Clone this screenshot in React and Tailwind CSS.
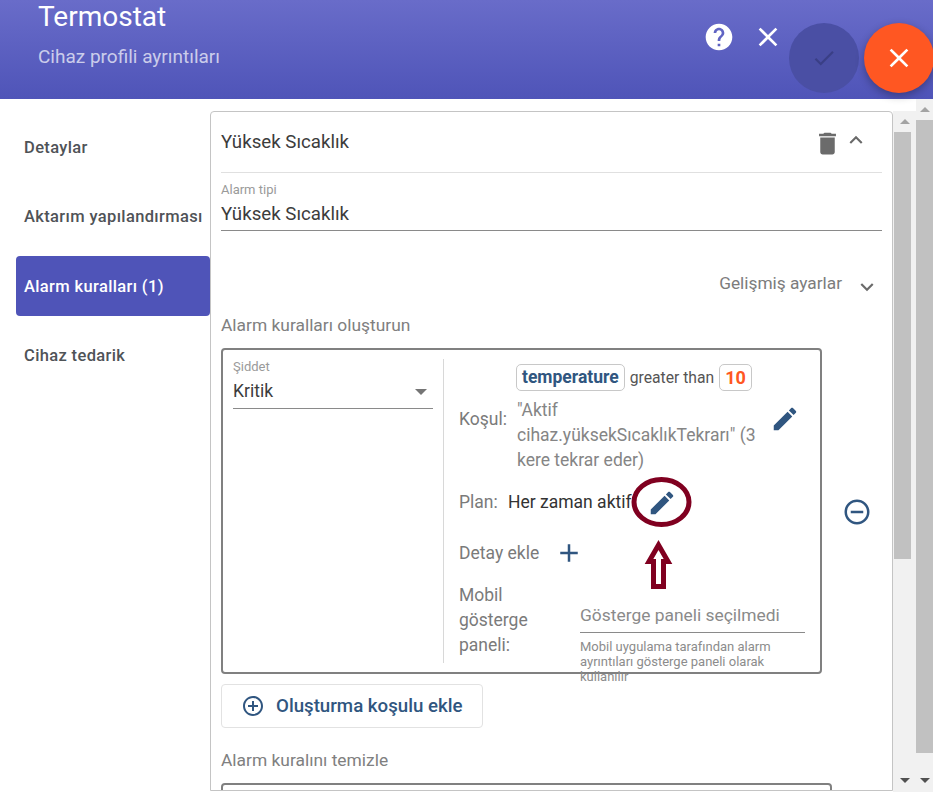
const P = {
  edit: "M3 17.25V21h3.75L17.81 9.94l-3.75-3.75L3 17.25zM20.71 7.04c.39-.39.39-1.02 0-1.41l-2.34-2.34c-.39-.39-1.02-.39-1.41 0l-1.83 1.83 3.75 3.75 1.83-1.83z",
  del: "M6 19c0 1.1.9 2 2 2h8c1.1 0 2-.9 2-2V7H6v12zM19 4h-3.5l-1-1h-5l-1 1H5v2h14V4z",
  help: "M12 2C6.48 2 2 6.48 2 12s4.48 10 10 10 10-4.48 10-10S17.52 2 12 2zm1 17h-2v-2h2v2zm2.07-7.75l-.9.92C13.45 12.9 13 13.5 13 15h-2v-.5c0-1.1.45-2.1 1.17-2.83l1.24-1.26c.37-.36.59-.86.59-1.41 0-1.1-.9-2-2-2s-2 .9-2 2H8c0-2.21 1.79-4 4-4s4 1.79 4 4c0 .88-.36 1.68-.93 2.25z",
  close: "M19 6.41L17.59 5 12 10.59 6.41 5 5 6.41 10.59 12 5 17.59 6.41 19 12 13.41 17.59 19 19 17.59 13.41 12z",
  check: "M9 16.17L4.83 12l-1.42 1.41L9 19 21 7l-1.41-1.41z",
  up: "M7.41 15.41L12 10.83l4.59 4.58L18 14l-6-6-6 6z",
  down: "M7.41 8.59L12 13.17l4.59-4.58L18 10l-6 6-6-6z",
  add: "M19 13h-6v6h-2v-6H5v-2h6V5h2v6h6v2z",
  addc: "M13 7h-2v4H7v2h4v4h2v-4h4v-2h-4V7zm-1-5C6.48 2 2 6.48 2 12s4.48 10 10 10 10-4.48 10-10S17.52 2 12 2zm0 18c-4.41 0-8-3.59-8-8s3.59-8 8-8 8 3.59 8 8-3.59 8-8 8z",
  remc: "M7 11v2h10v-2H7zm5-9C6.48 2 2 6.48 2 12s4.48 10 10 10 10-4.48 10-10S17.52 2 12 2zm0 18c-4.41 0-8-3.59-8-8s3.59-8 8-8 8 3.59 8 8-3.59 8-8 8z",
};

function Icon({ d, className }) {
  return (
    <svg viewBox="0 0 24 24" fill="currentColor" className={className}>
      <path d={d} />
    </svg>
  );
}

function Scrollbar({ width, thumbClass, thumbHeight }) {
  return (
    <div className={`${width} shrink-0 h-full bg-[#f1f1f1] flex flex-col items-center`}>
      <div className="h-[21px] flex items-center justify-center shrink-0 w-full">
        <div className="w-0 h-0 border-x-[5px] border-x-transparent border-b-[5px] border-b-[#a3a3a3]" />
      </div>
      <div className={`${thumbClass} ${thumbHeight} bg-[#c1c1c1] shrink-0`} />
      <div className="flex-1" />
      <div className="h-[14px] flex items-start justify-center shrink-0 w-full">
        <div className="w-0 h-0 border-x-[5px] border-x-transparent border-t-[5px] border-t-[#505050]" />
      </div>
    </div>
  );
}

const navItems = [
  { label: "Detaylar" },
  { label: "Aktarım yapılandırması" },
  { label: "Alarm kuralları (1)", active: true },
  { label: "Cihaz tedarik" },
];

export default function App() {
  return (
    <div className="relative w-[933px] h-[792px] overflow-hidden bg-white font-['Roboto',sans-serif]">
      <header className="h-[99px] flex justify-between bg-gradient-to-b from-[#696cc9] to-[#4f54b8]">
        <div className="pl-[38px]">
          <div className="text-[28px] leading-[34px] text-white">Termostat</div>
          <div className="mt-[11px] text-[19px] leading-[24px] text-white/70">Cihaz profili ayrıntıları</div>
        </div>
        <div className="flex items-start">
          <Icon d={P.help} className="w-[32px] h-[32px] mt-[21px] text-white" />
          <Icon d={P.close} className="w-[32px] h-[32px] mt-[21px] ml-[17px] text-white" />
          <div className="w-[70px] h-[70px] mt-[23px] ml-[5px] rounded-full bg-[#4a4fa4] flex items-center justify-center">
            <Icon d={P.check} className="w-[26px] h-[26px] text-[#3a3f86]" />
          </div>
          <div className="w-[70px] h-[70px] mt-[23px] ml-[5px] -mr-[1px] rounded-full bg-[#ff5722] flex items-center justify-center shadow-[0_3px_8px_rgba(0,0,0,0.3)]">
            <Icon d={P.close} className="w-[32px] h-[32px] text-white" />
          </div>
        </div>
      </header>

      <div className="flex h-[693px]">
        <nav className="w-[210px] shrink-0 pl-4 pt-[18px] flex flex-col gap-[9.5px]">
          {navItems.map((n) => (
            <div
              key={n.label}
              className={
                n.active
                  ? "h-[60px] pl-2 pt-[2px] flex items-center rounded-[4px] bg-[#4f54b8] text-white text-[16.5px] font-medium tracking-[0.36px] whitespace-nowrap"
                  : "h-[60px] pl-2 pt-[2px] flex items-center text-[#4f5357] text-[16.5px] font-medium tracking-[0.36px] whitespace-nowrap"
              }
            >
              {n.label}
            </div>
          ))}
        </nav>

        <main className="flex-1 min-w-0 pt-3">
          <div className="h-[680px] border border-[#c4c4c4] rounded-t-[4px] overflow-hidden pl-[10px] pr-[10px]">
            <div className="h-[61px] flex items-center justify-between border-b border-[#e0e0e0]">
              <span className="text-[18.7px] text-[#3c3c3c]">Yüksek Sıcaklık</span>
              <div className="flex items-center pr-[13px]">
                <Icon d={P.del} className="w-[29px] h-[29px] text-[#6b6b6b] mt-[3px]" />
                <Icon d={P.up} className="w-[26px] h-[26px] ml-[1px] text-[#6b6b6b] -mt-[4px]" />
              </div>
            </div>

            <div className="pt-[9px] h-[58px] border-b border-[#8a8a8a]">
              <div className="text-[13px] leading-[15px] text-[#9a9a9a]">Alarm tipi</div>
              <div className="text-[18.7px] leading-[26px] mt-[4px] text-[#3c3c3c]">Yüksek Sıcaklık</div>
            </div>

            <div className="mt-[40px] h-[26px] flex items-center justify-end text-[17.3px] text-[#7c7c7c]">
              <span>Gelişmiş ayarlar</span>
              <Icon d={P.down} className="w-[26px] h-[26px] ml-[12px] mr-[2px] mt-[6px] text-[#6b6b6b]" />
            </div>

            <div className="mt-[16px] text-[17.4px] leading-[24px] text-[#808080]">Alarm kuralları oluşturun</div>

            <div className="flex items-center mt-[11px]">
              <div className="w-[601px] h-[326px] shrink-0 border-2 border-[#808080] rounded-[4px] flex pl-[10px] pt-[9px] pb-[9px]">
                <div className="w-[200px] shrink-0 pt-[1px]">
                  <div className="text-[13px] leading-[14px] text-[#9a9a9a]">Şiddet</div>
                  <div className="mt-[1px] h-[34px] flex items-center justify-between border-b border-[#8a8a8a] pr-[6px]">
                    <span className="text-[17.5px] text-[#3c3c3c]">Kritik</span>
                    <div className="w-0 h-0 border-x-[6px] border-x-transparent border-t-[6px] border-t-[#757575]" />
                  </div>
                </div>
                <div className="ml-[10px] w-px bg-[#d8d8d8] shrink-0" />
                <div className="flex-1 min-w-0 pl-[15px] text-[17.5px] text-[#7a7a7a]">
                  <div className="ml-[57px] mt-[5px] flex items-center h-[27px] whitespace-nowrap">
                    <span className="h-[27px] px-[5px] flex items-center rounded-[5px] border border-[#c8c8c8] text-[#305680] font-bold text-[17.5px]">temperature</span>
                    <span className="ml-[5px] text-[15.7px] text-[#555]">greater than</span>
                    <span className="ml-[5px] h-[27px] px-[5px] flex items-center rounded-[5px] border border-[#c8c8c8] text-[#ff5722] font-bold text-[18px]">10</span>
                  </div>
                  <div className="flex items-start mt-[7px]">
                    <span className="w-[58px] shrink-0 mt-[9px] leading-[25px] text-[#7a7a7a]">Koşul:</span>
                    <span className="w-[245px] shrink-0 leading-[25px] text-[#858585]">"Aktif cihaz.yüksekSıcaklıkTekrarı" (3 kere tekrar eder)</span>
                    <Icon d={P.edit} className="w-[30px] h-[30px] ml-[8px] mt-[6px] text-[#305680]" />
                  </div>
                  <div className="flex items-center mt-[14px] h-[30px]">
                    <span className="w-[49px] shrink-0">Plan:</span>
                    <span className="text-[#333] whitespace-nowrap">Her zaman aktif</span>
                    <Icon d={P.edit} className="w-[30px] h-[30px] ml-[15px] mt-[1px] text-[#305680]" />
                  </div>
                  <div className="flex items-center mt-[21px] h-[30px]">
                    <span>Detay ekle</span>
                    <Icon d={P.add} className="w-[30px] h-[30px] ml-[15px] text-[#305680]" />
                  </div>
                  <div className="flex mt-[15px]">
                    <div className="w-[121px] shrink-0 leading-[25px]">
                      Mobil<br />gösterge<br />paneli:
                    </div>
                    <div className="w-[225px] shrink-0">
                      <div className="h-[50px] pt-[20px] border-b border-[#8a8a8a] text-[17.4px] leading-[24px] text-[#8a8a8a] whitespace-nowrap">Gösterge paneli seçilmedi</div>
                      <div className="mt-[6px] text-[13px] leading-[15px] text-[#8c8c8c]">Mobil uygulama tarafından alarm ayrıntıları gösterge paneli olarak kullanılır</div>
                    </div>
                  </div>
                </div>
              </div>
              <Icon d={P.remc} className="w-[30px] h-[30px] ml-[20px] mt-[1px] text-[#305680]" />
            </div>

            <button className="mt-[10px] w-[262px] h-[44px] flex items-center pl-[19px] rounded-[4px] border border-[#e2e2e2] bg-white">
              <Icon d={P.addc} className="w-[24px] h-[24px] text-[#305680]" />
              <span className="ml-[11px] text-[18.7px] font-medium text-[#305680] whitespace-nowrap">Oluşturma koşulu ekle</span>
            </button>

            <div className="mt-[20px] text-[17.4px] leading-[24px] text-[#808080]">Alarm kuralını temizle</div>
            <div className="mt-[11px] w-[611px] h-[40px] border-2 border-[#808080] rounded-[4px]" />
          </div>
        </main>

        <div className="pt-3 h-full shrink-0">
          <Scrollbar width="w-[23px]" thumbClass="w-[17px] -ml-[4px]" thumbHeight="h-[427px]" />
        </div>
        <Scrollbar width="w-[17px]" thumbClass="w-[17px]" thumbHeight="h-[633px]" />
      </div>

      {/* hand-drawn annotation over the screenshot */}
      <svg className="absolute left-[625px] top-[470px] w-[75px] h-[125px]" viewBox="0 0 75 125" fill="none" stroke="#800020" strokeWidth="5">
        <ellipse cx="36.5" cy="32" rx="27.5" ry="22.5" />
        <path d="M33.5 75 L43 91.5 L38.5 91.5 L38.5 116.5 L28.5 116.5 L28.5 91.5 L24 91.5 Z" fill="#fff" />
      </svg>
    </div>
  );
}
